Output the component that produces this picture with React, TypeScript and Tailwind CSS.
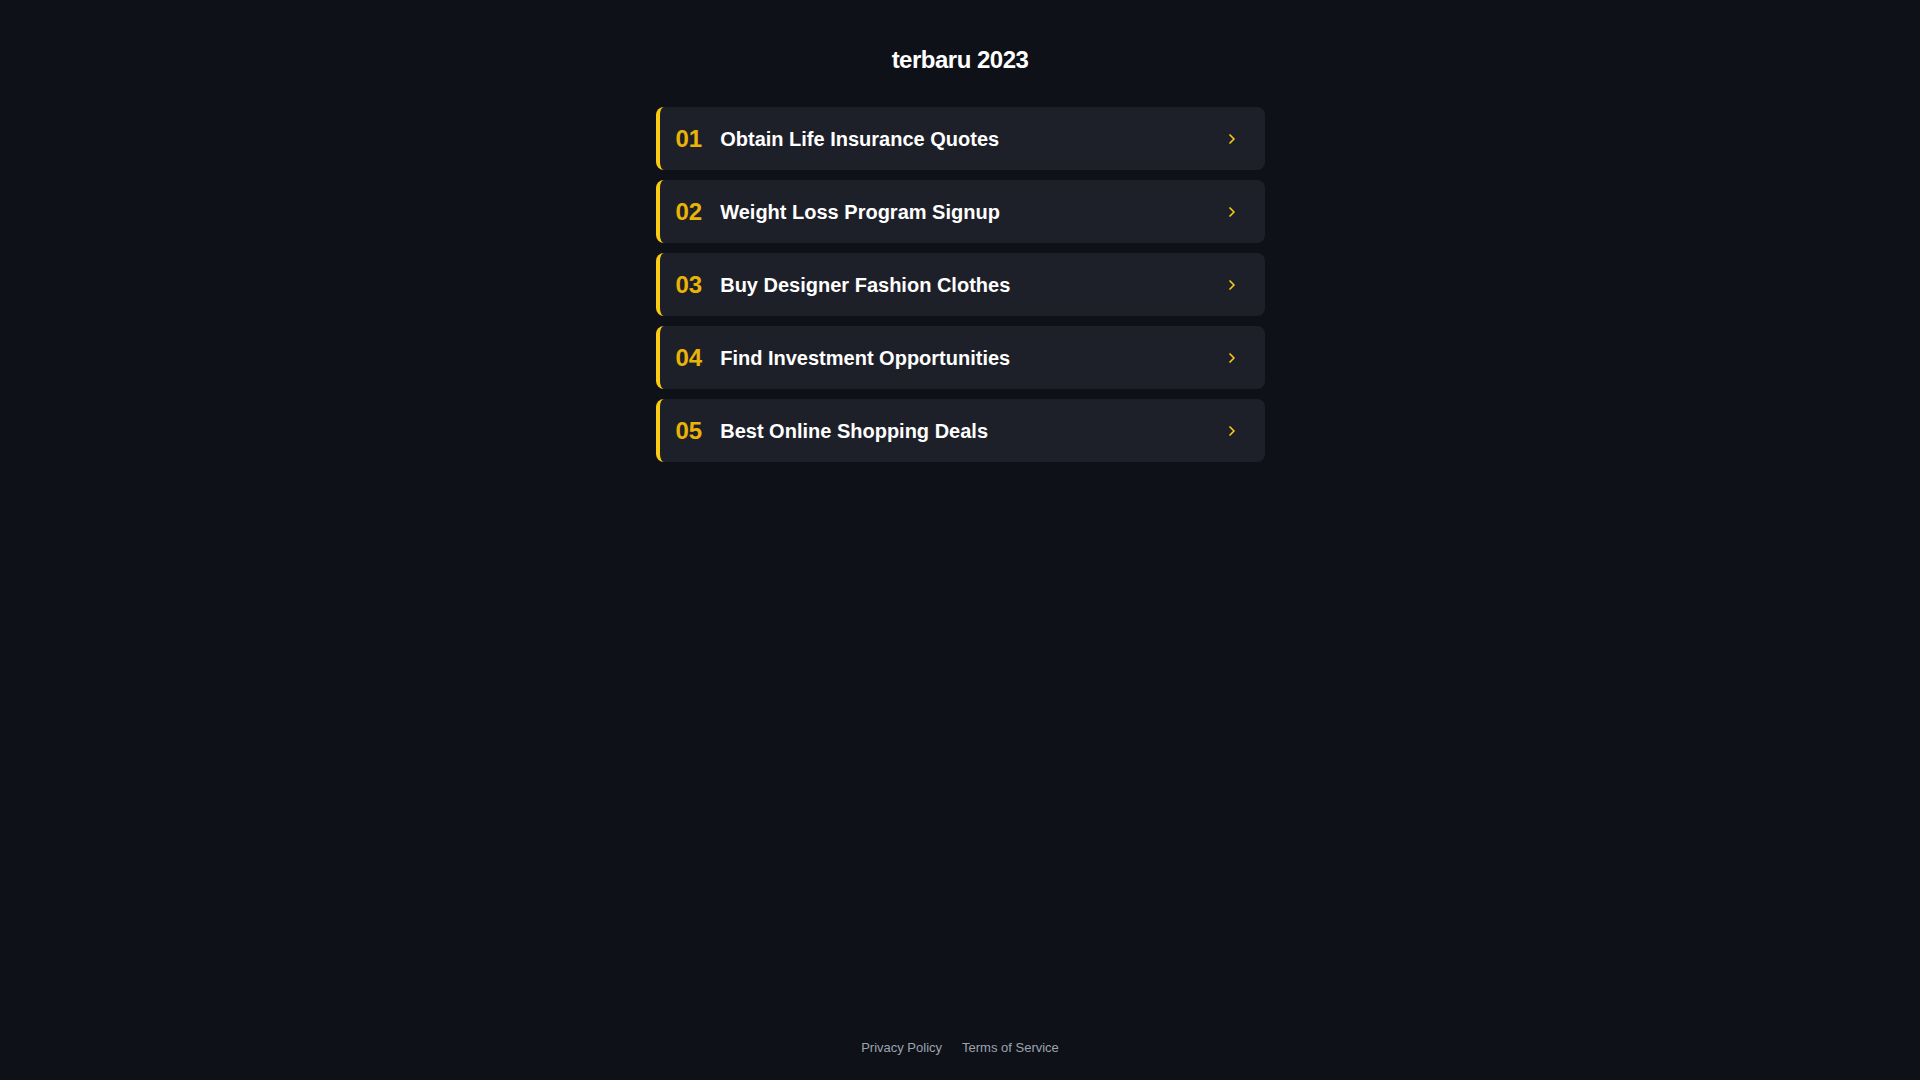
import React from "react";

const items = [
  "Obtain Life Insurance Quotes",
  "Weight Loss Program Signup",
  "Buy Designer Fashion Clothes",
  "Find Investment Opportunities",
  "Best Online Shopping Deals",
];

export default function App() {
  return (
    <div
      className="min-h-screen flex flex-col bg-[#0f1118] text-white"
      style={{ fontFamily: "'Liberation Sans', Arial, sans-serif" }}
    >
      <main className="flex-1 flex flex-col items-center pt-[44px]">
        <h1 className="text-2xl leading-8 font-bold text-white tracking-[-0.5px]">
          terbaru 2023
        </h1>
        <div className="w-[609px] mt-[31px] flex flex-col gap-[10px]">
          {items.map((t, i) => (
            <a
              key={t}
              href="#"
              className="h-[63px] flex items-center rounded-lg bg-[#1e2029] border-l-4 border-[#facc15] pl-4 pr-[25px]"
            >
              <span className="text-2xl leading-8 font-bold text-[#eab308]">
                {String(i + 1).padStart(2, "0")}
              </span>
              <span className="ml-[18px] text-xl leading-7 font-bold text-white flex-1">
                {t}
              </span>
              <svg
                width="16"
                height="16"
                viewBox="0 0 24 24"
                fill="none"
                stroke="#facc15"
                strokeWidth="2.5"
                strokeLinecap="round"
                strokeLinejoin="round"
              >
                <path d="m9 18 6-6-6-6" />
              </svg>
            </a>
          ))}
        </div>
      </main>
      <footer className="flex justify-center gap-5 pb-[22px] text-[13px] leading-5 text-[#9ca3af]">
        <a href="#">Privacy Policy</a>
        <a href="#">Terms of Service</a>
      </footer>
    </div>
  );
}
